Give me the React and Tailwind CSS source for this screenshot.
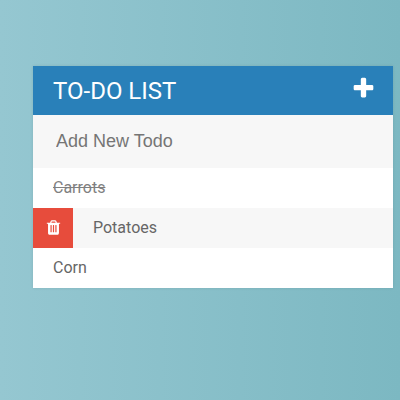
import React from "react";

const todos = [
  { text: "Carrots", done: true },
  { text: "Potatoes", active: true },
  { text: "Corn" },
];

function PlusIcon() {
  return (
    <svg viewBox="0 0 1792 1792" className="size-[25px] fill-current" aria-hidden="true">
      <path d="M1600 736v192q0 40-28 68t-68 28h-416v416q0 40-28 68t-68 28h-192q-40 0-68-28t-28-68v-416h-416q-40 0-68-28t-28-68v-192q0-40 28-68t68-28h416v-416q0-40 28-68t68-28h192q40 0 68 28t28 68v416h416q40 0 68 28t28 68z" />
    </svg>
  );
}

function TrashIcon() {
  return (
    <svg viewBox="0 0 1792 1792" className="size-[17px] fill-current" aria-hidden="true">
      <path d="M704 1376v-704q0-14-9-23t-23-9h-64q-14 0-23 9t-9 23v704q0 14 9 23t23 9h64q14 0 23-9t9-23zm256 0v-704q0-14-9-23t-23-9h-64q-14 0-23 9t-9 23v704q0 14 9 23t23 9h64q14 0 23-9t9-23zm256 0v-704q0-14-9-23t-23-9h-64q-14 0-23 9t-9 23v704q0 14 9 23t23 9h64q14 0 23-9t9-23zm-544-992h448l-48-117q-7-9-17-11h-317q-10 2-17 11zm928 32v64q0 14-9 23t-23 9h-96v948q0 83-47 143.5t-113 60.5h-832q-66 0-113-58.5t-47-141.5v-952h-96q-14 0-23-9t-9-23v-64q0-14 9-23t23-9h309l70-167q15-37 54-63t79-26h320q40 0 79 26t54 63l70 167h309q14 0 23 9t9 23z" />
    </svg>
  );
}

export default function App() {
  return (
    <div className="min-h-screen bg-linear-to-r from-[#95c7d1] to-[#7cb8c2] pt-[66px] pr-[7px] pb-10 pl-[33px] font-[Roboto,sans-serif]">
      <main className="bg-[#f7f7f7] shadow-[0_0_3px_rgba(0,0,0,0.1)]">
        <header className="flex items-center justify-between bg-[#2980b9] pr-[17px] pl-5 text-white">
          <h1 className="pt-[9px] pb-2 text-2xl leading-8 font-normal uppercase">To-Do List</h1>
          <button type="button" aria-label="Toggle new todo field" className="pb-1">
            <PlusIcon />
          </button>
        </header>
        <input
          type="text"
          placeholder="Add New Todo"
          aria-label="Add New Todo"
          className="block h-[53px] w-full bg-[#f7f7f7] px-[23px] font-['Liberation_Sans',Arial,sans-serif] text-lg text-[#2980b9] outline-none placeholder:text-[#757575]"
        />
        <ul className="text-base leading-10 text-[#666666]">
          {todos.map((todo) => (
            <li key={todo.text} className="flex h-10 odd:bg-white even:bg-[#f7f7f7]">
              {todo.active && (
                <button
                  type="button"
                  aria-label={`Delete ${todo.text}`}
                  className="flex w-10 items-center justify-center bg-[#e74c3c] pb-0.5 text-white"
                >
                  <TrashIcon />
                </button>
              )}
              <span className={todo.done ? "pl-5 text-[#808080] line-through" : "pl-5"}>{todo.text}</span>
            </li>
          ))}
        </ul>
      </main>
    </div>
  );
}
